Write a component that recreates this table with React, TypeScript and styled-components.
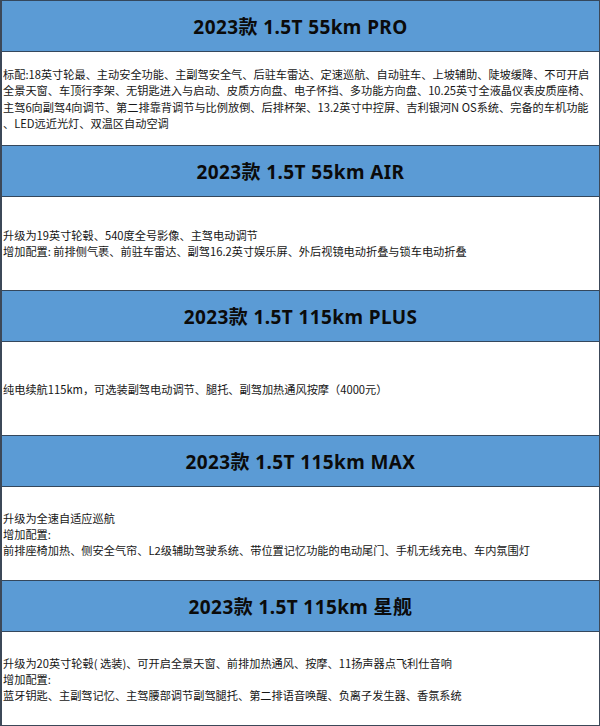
import React from 'react';
import styled, { createGlobalStyle } from 'styled-components';

const GlobalStyle = createGlobalStyle`
	html, body {
		margin: 0;
		padding: 0;
		background: #ffffff;
	}
	body {
		font-family: "Noto Sans", "Noto Sans CJK SC", sans-serif;
		color: #111111;
	}
`;

const Table = styled.div`
	width: 597px;
	border-left: 2px solid #3c4858;
	border-right: 1px solid #3c4858;
	border-bottom: 1px solid #3c4858;
	display: flex;
	flex-direction: column;
`;

const Section = styled.section`
	display: flex;
	flex-direction: column;
`;

const Header = styled.div`
	height: 50px;
	border-top: 1px solid #34475c;
	border-bottom: 1px solid #34475c;
	background: #5b9bd5;
	display: flex;
	align-items: center;
	justify-content: center;
	font-family: "Noto Sans", "Noto Sans CJK SC", sans-serif;
	font-weight: 700;
	font-size: 19px;
	letter-spacing: 0.4px;
	color: #0b0b0b;
`;

const Body = styled.div`
	height: 93px;
	padding-left: 1px;
	display: flex;
	flex-direction: column;
	justify-content: center;
	font-family: "Noto Sans CJK SC", "Noto Sans", sans-serif;
	font-size: 11.2px;
	line-height: ${(p: { $lh: number }) => p.$lh}px;
	color: #161616;
`;

const Line = styled.div`
	white-space: nowrap;
`;

interface Trim {
	title: string;
	lineHeight: number;
	lines: string[];
}

const trims: Trim[] = [
	{
		title: '2023款 1.5T 55km PRO',
		lineHeight: 16.3,
		lines: [
			'标配:18英寸轮最、主动安全功能、主副驾安全气、后驻车雷达、定速巡航、自动驻车、上坡辅助、陡坡缓降、不可开启',
			'全景天窗、车顶行李架、无钥匙进入与启动、皮质方向盘、电子怀挡、多功能方向盘、10.25英寸全液晶仪表皮质座椅、',
			'主驾6向副驾4向调节、第二排靠背调节与比例放倒、后排杯架、13.2英寸中控屏、吉利银河N OS系统、完备的车机功能',
			'、LED远近光灯、双温区自动空调',
		],
	},
	{
		title: '2023款 1.5T 55km AIR',
		lineHeight: 15.6,
		lines: [
			'升级为19英寸轮毂、540度全号影像、主驾电动调节',
			'增加配置: 前排侧气裹、前驻车雷达、副驾16.2英寸娱乐屏、外后视镜电动折叠与锁车电动折叠',
		],
	},
	{
		title: '2023款 1.5T 115km PLUS',
		lineHeight: 16,
		lines: ['纯电续航115km，可选装副驾电动调节、腿托、副驾加热通风按摩（4000元）'],
	},
	{
		title: '2023款 1.5T 115km MAX',
		lineHeight: 16,
		lines: [
			'升级为全速自适应巡航',
			'增加配置:',
			'前排座椅加热、侧安全气帘、L2级辅助驾驶系统、带位置记忆功能的电动尾门、手机无线充电、车内氛围灯',
		],
	},
	{
		title: '2023款 1.5T 115km 星舰',
		lineHeight: 16,
		lines: [
			'升级为20英寸轮毂( 选装)、可开启全景天窗、前排加热通风、按摩、11扬声器点飞利仕音响',
			'增加配置:',
			'蓝牙钥匙、主副驾记忆、主驾腰部调节副驾腿托、第二排语音唤醒、负离子发生器、香氛系统',
		],
	},
];

const App: React.FC = () => {
	return (
		<React.Fragment>
			<GlobalStyle />
			<Table>
				{trims.map((trim) => (
					<Section key={trim.title}>
						<Header>{trim.title}</Header>
						<Body $lh={trim.lineHeight}>
							{trim.lines.map((line, i) => (
								<Line key={i}>{line}</Line>
							))}
						</Body>
					</Section>
				))}
			</Table>
		</React.Fragment>
	);
};

export default App;
